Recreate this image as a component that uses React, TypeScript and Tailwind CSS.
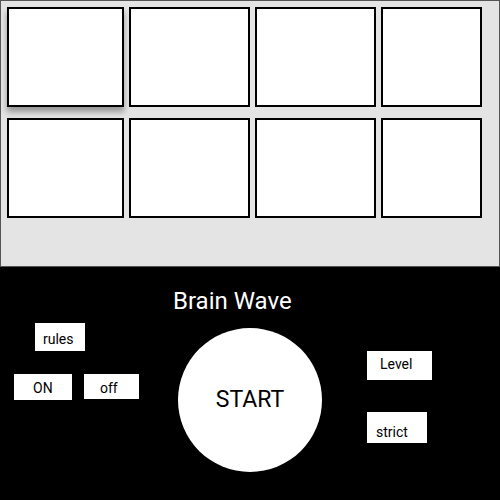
const tileWidths = ["w-[117px]", "w-[121px]", "w-[121px]", "w-[101px]"];

function Tile({ width, lifted }: { width: string; lifted?: boolean }) {
  return (
    <div
      className={`${width} h-[100px] bg-white border-2 border-black ${
        lifted ? "shadow-[0_5px_6px_rgba(0,0,0,0.35)]" : ""
      }`}
    />
  );
}

export default function App() {
  return (
    <div className="w-[500px] h-[500px] flex flex-col font-['Roboto',sans-serif]">
      {/* Tiles board */}
      <div className="h-[267px] bg-[#e4e4e4] border border-[#555] pl-[6px] pt-[6px] flex flex-col gap-[11px]">
        {[0, 1].map((row) => (
          <div key={row} className="flex gap-[5px]">
            {tileWidths.map((w, i) => (
              <Tile key={i} width={w} lifted={row === 0 && i === 0} />
            ))}
          </div>
        ))}
      </div>

      {/* Controls */}
      <div className="flex-1 bg-black flex">
        <div className="w-[178px] flex flex-col pt-[56px]">
          <div className="ml-[35px] w-[50px] h-[28px] bg-white text-black text-[14px] leading-[16px] pl-[8px] pt-[8px]">
            rules
          </div>
          <div className="flex mt-[23px]">
            <div className="ml-[14px] w-[58px] h-[26px] bg-white text-black text-[14px] leading-[16px] pl-[19px] pt-[6px]">
              ON
            </div>
            <div className="ml-[12px] w-[55px] h-[25px] bg-white text-black text-[14px] leading-[16px] pl-[16px] pt-[6px]">
              off
            </div>
          </div>
        </div>

        <div className="w-[144px] flex flex-col">
          <div className="mt-[20px] -ml-[5px] whitespace-nowrap text-white text-[24px] leading-[28px]">
            Brain Wave
          </div>
          <div className="mt-[13px] w-[144px] h-[144px] rounded-full bg-white flex items-center justify-center text-black text-[23px]">
            START
          </div>
        </div>

        <div className="flex flex-col pt-[84px] pl-[45px]">
          <div className="w-[65px] h-[29px] bg-white text-black text-[14px] leading-[16px] pl-[13px] pt-[5px]">
            Level
          </div>
          <div className="mt-[32px] w-[60px] h-[31px] bg-white text-black text-[14px] leading-[16px] pl-[9px] pt-[12px]">
            strict
          </div>
        </div>
      </div>
    </div>
  );
}
